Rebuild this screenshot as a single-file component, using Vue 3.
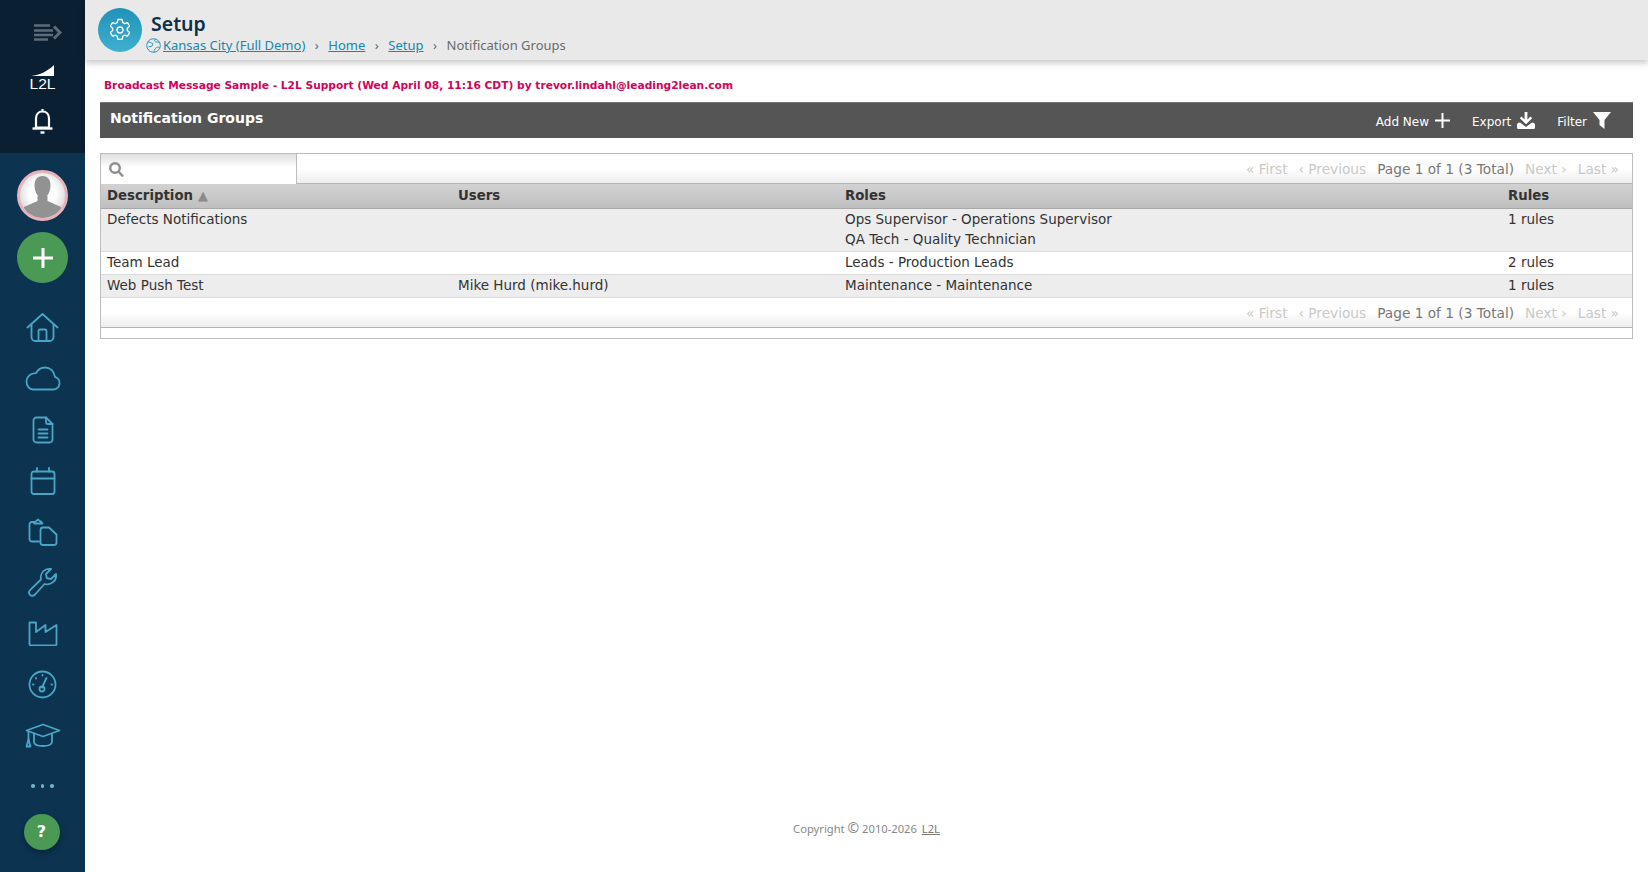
<script setup>
const navIcons = [
  { name: 'home', w: 33, h: 29, paths: ['M1.5 14.500 16.500 1 31.500 14.500', 'M5.500 11v13a4 4 0 0 0 4 4h14a4 4 0 0 0 4-4V11', 'M12.500 28V18a1.500 1.500 0 0 1 1.500-1.500h5a1.500 1.500 0 0 1 1.500 1.500v10'] },
  { name: 'cloud', w: 36, h: 25, paths: ['M8 23.500h20a6.500 6.500 0 0 0 2-12.700C29 5 25 1.500 20 1.500c-4 0-7.300 2.300-9 5.600C5.200 7 1.500 11 1.500 15.500c0 4.500 2.800 8 6.500 8Z'] },
  { name: 'doc', w: 22, h: 28, paths: ['M14 1.500H4.500a3 3 0 0 0-3 3v19a3 3 0 0 0 3 3h13a3 3 0 0 0 3-3V8Z', 'M14 1.500V6a2 2 0 0 0 2 2h4.500', 'M6.500 13.500h9M6.500 17.500h9M6.500 21.500h9'] },
  { name: 'calendar', w: 26, h: 28, paths: ['M4 4.500h18a2.500 2.500 0 0 1 2.500 2.500v17.500a2.500 2.500 0 0 1-2.500 2.500H4a2.500 2.500 0 0 1-2.500-2.500V7A2.500 2.500 0 0 1 4 4.500Z', 'M1.500 11.500h23', 'M7 1v3.500M19 1v3.500'] },
  { name: 'clipboard', w: 30, h: 28, paths: ['M6.500 4H4a2.500 2.500 0 0 0-2.500 2.500V21A2.500 2.500 0 0 0 4 23.500h7', 'M6 5.500c0-2 2.500-2 4-4 1.500 2 4 2 4.500 4Z', 'M15 9.500h6l7.500 7V25a2.500 2.500 0 0 1-2.500 2H15a2.500 2.500 0 0 1-2.500-2V12a2.500 2.500 0 0 1 2.500-2.500Z'] },
  { name: 'wrench', w: 31, h: 31, paths: ['M19 2.500a9 9 0 0 1 5-.500l-5 5 .8 4.200 4.200.8 5-5a9 9 0 0 1-11.500 10L8 27.500c-1.500 1.500-3.500 1.800-5 .300s-1.200-3.500.3-5L14 12.500A9 9 0 0 1 19 2.500Z'] },
  { name: 'factory', w: 30, h: 25, paths: ['M1.500 1.500h6.500v9.500l9.500-7v7l11-7v19a1.500 1.500 0 0 1-1.500 1.500H3a1.500 1.500 0 0 1-1.500-1.500Z'] },
  { name: 'gauge', w: 29, h: 29, paths: ['M14.500 1.500a13 13 0 1 0 0 26 13 13 0 0 0 0-26Z', 'M14 17.500 18.500 8', 'M14 16.500a2.500 2.500 0 1 0 0 5 2.500 2.500 0 0 0 0-5Z', 'M14.500 5v.5M8 8v.5M5 14.500h.5M23.500 14.500h.5'] },
  { name: 'cap', w: 36, h: 25, paths: ['M18 1.500 34.500 7.500 18 13.500 1.500 7.500Z', 'M9 11v8c0 2.500 4 4 9 4s9-1.500 9-4v-8', 'M3.500 9v8', 'M3.500 16.500 5.500 23.500H1.500Z'] },
];
const columns = [
  { key: 'description', label: 'Description', width: '351px' },
  { key: 'users', label: 'Users', width: '387px' },
  { key: 'roles', label: 'Roles', width: '663px' },
  { key: 'rules', label: 'Rules', width: 'auto' },
];
const rows = [
  { description: 'Defects Notifications', users: '', roles: ['Ops Supervisor - Operations Supervisor', 'QA Tech - Quality Technician'], rules: '1 rules' },
  { description: 'Team Lead', users: '', roles: ['Leads - Production Leads'], rules: '2 rules' },
  { description: 'Web Push Test', users: 'Mike Hurd (mike.hurd)', roles: ['Maintenance - Maintenance'], rules: '1 rules' },
];
</script>

<template>
  <div class="app">
    <aside class="sidebar">
      <div class="side-top">
        <svg class="menu-icon" width="28" height="17" viewBox="0 0 28 17" fill="none" stroke="#5f6c78" stroke-width="2.600">
          <path d="M0 1.500h16M0 6.500h19M0 11h19M0 15.500h14" />
          <path d="M20 2.500 26 8.500 20 14.500" stroke-width="3" />
        </svg>
        <div class="logo">
          <svg class="logo-swoosh" width="23" height="11" viewBox="0 0 23 11"><path d="M0 11C9 10 17 6 23 0v11Z" fill="#fff" /></svg>
          <span class="logo-text">L2L</span>
        </div>
        <svg class="bell" width="21" height="26" viewBox="0 0 21 26" fill="none" stroke="#fff" stroke-width="2.200">
          <path d="M10.500 1v2.500M10.500 3.500c-4 0-6.500 3-6.500 7V19.500h13v-9c0-4-2.500-7-6.500-7Z" />
          <path d="M.5 20.500h20" stroke-width="2.400" />
          <path d="M8.500 24.500h4" stroke-width="2.400" />
        </svg>
      </div>
      <div class="side-nav">
        <div class="avatar">
          <svg width="45" height="45" viewBox="0 0 45 45">
            <path d="M22.500 3c5.500 0 8 4 8 9.500 0 6.500-3.500 12.500-8 12.500s-8-6-8-12.500C14.500 7 17 3 22.500 3Z" fill="#929292" />
            <path d="M17.500 23v5L4 34c-1 .5 2 11 18.500 11S42 34.500 41 34l-13.500-6v-5Z" fill="#929292" />
          </svg>
        </div>
        <button class="add-btn" type="button">
          <svg width="24" height="24" viewBox="0 0 24 24" fill="none" stroke="#fff" stroke-width="3"><path d="M12 2v20M2 12h20" /></svg>
        </button>
        <ul class="nav-list">
          <li v-for="icon in navIcons" :key="icon.name" class="nav-item">
            <svg :width="icon.w" :height="icon.h" :viewBox="`0 0 ${icon.w} ${icon.h}`" fill="none" stroke="#4ba6c6" stroke-width="1.800" stroke-linecap="round" stroke-linejoin="round">
              <path v-for="(d, i) in icon.paths" :key="i" :d="d" />
            </svg>
          </li>
        </ul>
        <div class="dots"><i /><i /><i /></div>
        <button class="help-btn" type="button">?</button>
      </div>
    </aside>

    <div class="main">
      <header class="page-header">
        <div class="gear-badge">
          <svg width="24" height="24" viewBox="0 0 24 24" fill="none" stroke="#fff" stroke-width="1.300" stroke-linejoin="round">
            <path d="M9.900 1.500h4.200l.6 3 1.900 1.100 2.900-1 2.100 3.600-2.300 2v2.400l2.300 2-2.100 3.600-2.900-1-1.900 1.100-.6 3H9.900l-.6-3-1.900-1.100-2.900 1-2.100-3.600 2.300-2v-2.400l-2.300-2 2.100-3.600 2.900 1 1.900-1.100Z" />
            <circle cx="12" cy="12" r="3" />
          </svg>
        </div>
        <div class="header-text">
          <h1 class="page-title">Setup</h1>
          <nav class="crumbs">
            <svg class="globe" width="15" height="15" viewBox="0 0 15 15" fill="none" stroke="#2796b8" stroke-width="1">
              <circle cx="7.500" cy="7.500" r="6.800" />
              <path d="M2 4c2 0 3 1 4 1s1 2 0 3-3 0-3.500 1M9 1.200C8 3 9 4 10.500 4s3 0 3.300 1M8 14c0-2 1-3 2-4s2-1 3.500-.5" />
            </svg>
            <a class="crumb-link">Kansas City (Full Demo)</a>
            <span class="sep">›</span>
            <a class="crumb-link">Home</a>
            <span class="sep">›</span>
            <a class="crumb-link">Setup</a>
            <span class="sep">›</span>
            <span class="crumb-current">Notification Groups</span>
          </nav>
        </div>
      </header>

      <p class="broadcast">Broadcast Message Sample - L2L Support (Wed April 08, 11:16 CDT) by trevor.lindahl@leading2lean.com</p>

      <section class="content">
        <div class="title-bar">
          <h2 class="title-text">Notification Groups</h2>
          <div class="actions">
            <a class="action">Add New
              <svg width="15" height="15" viewBox="0 0 15 15" fill="none" stroke="#fff" stroke-width="2"><path d="M7.500 0v15M0 7.500h15" /></svg>
            </a>
            <a class="action">Export
              <svg width="18" height="17" viewBox="0 0 18 17" fill="#fff"><path d="M7.600 0h2.800v7.500L13.500 4.500 15.200 6.200 9 12.200 2.800 6.200 4.500 4.500l3.100 3Z" /><path d="M0 13c0-1.500 1-2.500 3-2.500l6 4.500 6-4.500c2 0 3 1 3 2.500v2.500c0 .8-.6 1.500-1.500 1.500h-15C.6 17 0 16.300 0 15.500Z" /></svg>
            </a>
            <a class="action">Filter
              <svg width="18" height="17" viewBox="0 0 18 17" fill="#fff"><path d="M0 0h18l-6.500 8v9l-5-4V8Z" /></svg>
            </a>
          </div>
        </div>

        <div class="grid-box">
          <div class="toolbar">
            <div class="search">
              <svg width="15" height="15" viewBox="0 0 15 15" fill="none" stroke="#8f8f8f" stroke-width="2.400"><circle cx="6" cy="6" r="4.800" /><path d="M9.500 9.500 14 14.500" /></svg>
            </div>
            <div class="pager">
              <span class="off">« First</span>
              <span class="off">‹ Previous</span>
              <span class="count">Page 1 of 1 (3 Total)</span>
              <span class="off">Next ›</span>
              <span class="off">Last »</span>
            </div>
          </div>
          <table class="grid">
            <colgroup>
              <col v-for="c in columns" :key="c.key" :style="{ width: c.width }" />
            </colgroup>
            <thead>
              <tr>
                <th v-for="c in columns" :key="c.key">{{ c.label }}<span v-if="c.key === 'description'" class="sort">▲</span></th>
              </tr>
            </thead>
            <tbody>
              <tr v-for="r in rows" :key="r.description">
                <td>{{ r.description }}</td>
                <td>{{ r.users }}</td>
                <td><div v-for="role in r.roles" :key="role">{{ role }}</div></td>
                <td>{{ r.rules }}</td>
              </tr>
            </tbody>
          </table>
          <div class="toolbar foot">
            <div class="pager">
              <span class="off">« First</span>
              <span class="off">‹ Previous</span>
              <span class="count">Page 1 of 1 (3 Total)</span>
              <span class="off">Next ›</span>
              <span class="off">Last »</span>
            </div>
          </div>
          <div class="tail"></div>
        </div>
      </section>

      <footer class="copyright">Copyright <span class="copy-mark">©</span> 2010-2026 <a class="copy-link">L2L</a></footer>
    </div>
  </div>
</template>

<style>
html, body { margin: 0; padding: 0; background: #fff; }
</style>

<style scoped>
.app { display: flex; height: 100vh; min-height: 872px; font-family: "DejaVu Sans", Verdana, sans-serif; color: #333; overflow: hidden; }
.sidebar { width: 85px; flex: none; display: flex; flex-direction: column; background: #0c3350; }
.side-top { height: 153px; box-sizing: border-box; background: #0a1f32; display: flex; flex-direction: column; align-items: center; padding-top: 24px; }
.menu-icon { margin-left: 10px; }
.logo { margin-top: 24px; display: flex; flex-direction: column; align-items: center; width: 23px; }
.logo-swoosh { display: block; }
.logo-text { font-family: "Liberation Sans", Arial, sans-serif; font-size: 15.500px; line-height: 13px; color: #fff; margin-top: 1px; }
.bell { margin-top: 18px; }
.side-nav { flex: 1; display: flex; flex-direction: column; align-items: center; padding-top: 17px; }
.avatar { width: 51px; height: 51px; box-sizing: border-box; border: 3px solid #e8b2bd; border-radius: 50%; overflow: hidden; background: radial-gradient(circle at 50% 45%, #fff 40%, #bdbdbd 100%); display: flex; }
.add-btn { width: 51px; height: 51px; margin-top: 11px; border: 0; padding: 0; border-radius: 50%; background: #4a9a55; display: flex; align-items: center; justify-content: center; }
.nav-list { list-style: none; margin: 19px 0 0; padding: 0; width: 100%; }
.nav-item { height: 51px; display: flex; align-items: center; justify-content: center; }
.dots { display: flex; gap: 6px; margin-top: 23px; }
.dots i { width: 3.500px; height: 3.500px; border-radius: 50%; background: #6db3cc; }
.help-btn { width: 36px; height: 36px; margin-top: 26px; margin-right: 2px; border: 0; padding: 0; border-radius: 50%; background: #4a9a55; color: #fff; font: bold 16px "DejaVu Sans", sans-serif; box-shadow: 0 3px 6px rgba(0, 0, 0, .3); }

.main { flex: 1; min-width: 0; display: flex; flex-direction: column; }
.page-header { height: 60px; flex: none; box-sizing: border-box; background: #e9e9e9; box-shadow: 0 3px 6px rgba(0, 0, 0, .22); display: flex; align-items: flex-start; padding: 8px 0 0 13px; gap: 9px; }
.gear-badge { width: 44px; height: 44px; flex: none; border-radius: 50%; background: linear-gradient(180deg, #1f92b8, #3fb0cf); display: flex; align-items: center; justify-content: center; }
.header-text { display: flex; flex-direction: column; }
.page-title { margin: 3px 0 0; font: 600 19.500px/26px "Noto Sans", sans-serif; color: #0f2f48; }
.crumbs { display: flex; align-items: center; margin-left: -5px; margin-top: -1px; font: 13px/18px "Noto Sans", sans-serif; color: #6b6b6b; }
.globe { margin-right: 2px; }
.crumb-link { color: #1488ac; text-decoration: underline; }
.sep { margin: 0 9.500px; color: #666; }
.crumb-current { color: #6b6b6b; }

.broadcast { margin: 0; padding: 19px 0 0 19px; font-size: 10.660px; line-height: 14px; font-weight: 700; color: #d1045a; }
.content { padding: 9px 15px 0; }
.title-bar { height: 36px; box-sizing: border-box; background: #555; border-top: 1px solid #777; display: flex; align-items: center; justify-content: space-between; padding: 0 22px 0 10px; color: #fff; }
.title-text { margin: 0 0 6px; font-size: 14px; font-weight: 700; }
.actions { display: flex; gap: 22px; padding-top: 2px; }
.action { display: flex; align-items: center; gap: 6px; font-size: 12px; color: #fff; }
.action svg { margin-top: -3px; }
.grid-box { margin-top: 15px; border: 1px solid #bdbdbd; height: 186px; box-sizing: border-box; display: flex; flex-direction: column; }
.toolbar { height: 30px; flex: none; box-sizing: border-box; display: flex; justify-content: space-between; border-bottom: 1px solid #b5b5b5; background: linear-gradient(180deg, #fff 50%, #ededed 100%); }
.foot { justify-content: flex-end; height: 30px; }
.foot .pager { padding-top: 2px; }
.search { width: 196px; box-sizing: border-box; height: 30px; border-right: 1px solid #bdbdbd; background: linear-gradient(180deg, #dedede, #fff 45%); padding: 8px 0 0 8px; }
.pager { display: flex; gap: 11px; align-items: center; padding-right: 13px; font-size: 13.700px; }
.off { color: #c9c9c9; }
.count { color: #777; }
.grid { width: 100%; table-layout: fixed; border-collapse: collapse; font-size: 13.500px; line-height: 20px; }
.grid th { height: 24px; box-sizing: border-box; padding: 0 0 0 6px; text-align: left; font-weight: 700; font-size: 13.300px; color: #333; background: linear-gradient(180deg, #d2d2d2, #bfbfbf); border-bottom: 1px solid #a8a8a8; }
.sort { margin-left: 5px; font-size: 13px; color: #8a8a8a; font-weight: 400; }
.grid td { padding: 0 0 2px 6px; vertical-align: top; border-bottom: 1px solid #dcdcdc; color: #333; }
.grid tbody tr:nth-child(odd) { background: #ededed; }
.tail { flex: 1; }
.copyright { margin-top: auto; margin-bottom: 36px; text-align: center; font: 11.200px/14px "Noto Sans", sans-serif; color: #888; }
.copy-mark { font-size: 14px; line-height: 14px; }
.copy-link { color: #777; text-decoration: underline; margin-left: 2px; }
</style>
